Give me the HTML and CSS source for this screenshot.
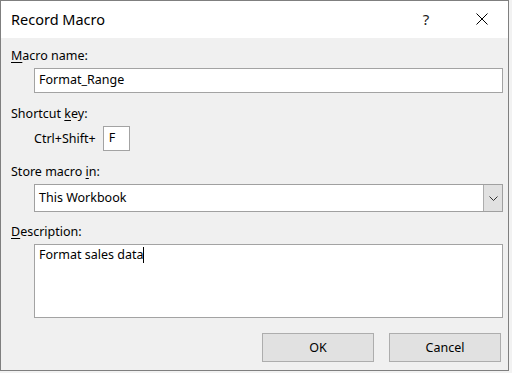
FILE: index.html
```html
<!DOCTYPE html>
<html lang="en">
<head>
<meta charset="utf-8">
<title>Record Macro</title>
<link rel="stylesheet" href="styles.css">
</head>
<body>
<div class="dialog">
  <div class="titlebar">
    <span class="title">Record Macro</span>
    <span class="tbtn help">?</span>
    <span class="tbtn close">
      <svg width="12" height="12" viewBox="0 0 12 12"><path d="M0.5 0.5 L11.5 11.5 M11.5 0.5 L0.5 11.5" stroke="#000" stroke-width="1" fill="none"/></svg>
    </span>
  </div>
  <div class="content">
    <div class="lbl"><u>M</u>acro name:</div>
    <div class="field input">Format_Range</div>

    <div class="lbl gap13">Shortcut <u>k</u>ey:</div>
    <div class="shortcut">
      <span class="ctrl">Ctrl+Shift+</span>
      <div class="keybox">F</div>
    </div>

    <div class="lbl gap13">Store macro <u>i</u>n:</div>
    <div class="field select">
      <span class="sel-text">This Workbook</span>
      <span class="drop">
        <svg width="9" height="5" viewBox="0 0 9 5"><path d="M0.5 0.5 L4.5 4.5 L8.5 0.5" stroke="#333" stroke-width="1" fill="none"/></svg>
      </span>
    </div>

    <div class="lbl gap12"><u>D</u>escription:</div>
    <div class="field textarea">Format sales data<span class="caret"></span></div>

    <div class="buttons">
      <div class="btn">OK</div>
      <div class="btn">Cancel</div>
    </div>
  </div>
</div>
</body>
</html>
```

FILE: styles.css
```css
html {
  background: #f2f2f2;
}
body {
  margin: 0;
  font-family: "Noto Sans", "Open Sans", sans-serif;
  font-size: 12.5px;
  color: #000;
}
.dialog {
  box-sizing: border-box;
  width: 509px;
  height: 371px;
  border: 1px solid #7f7f7f;
  background: #f0f0f0;
  display: flex;
  flex-direction: column;
}
.titlebar {
  box-sizing: border-box;
  height: 37px;
  background: #fff;
  display: flex;
  align-items: flex-start;
  padding: 8px 8px 0 10px;
}
.title {
  flex: 1;
  font-size: 14.5px;
  line-height: 20px;
}
.tbtn {
  width: 36px;
  display: flex;
  justify-content: center;
}
.help {
  font-size: 15px;
  line-height: 20px;
  color: #1a1a1a;
  margin-right: 20px;
}
.close {
  padding-top: 4px;
}
.content {
  flex: 1;
  padding: 10px 5px 8px 10px;
  display: flex;
  flex-direction: column;
}
.lbl {
  line-height: 16px;
  height: 16px;
}
.lbl u {
  text-underline-offset: 2px;
}
.gap13 { margin-top: 13px; }
.gap12 { margin-top: 12px; }
.field {
  box-sizing: border-box;
  margin-left: 23px;
  margin-top: 4px;
  background: #fff;
  border: 1px solid #a3a3a3;
  line-height: 16px;
}
.input {
  height: 25px;
  padding: 3px 4px;
}
.shortcut {
  margin: 4px 0 0 23px;
  display: flex;
  align-items: center;
  gap: 7px;
  height: 25px;
  line-height: 16px;
}
.keybox {
  box-sizing: border-box;
  width: 27px;
  height: 25px;
  border: 1px solid #a3a3a3;
  background: #fff;
  padding: 3px 5px;
}
.select {
  height: 28px;
  display: flex;
  align-items: center;
  border-color: #a0a0a0;
}
.sel-text {
  flex: 1;
  padding-left: 4px;
}
.drop {
  box-sizing: border-box;
  width: 19px;
  align-self: stretch;
  background: #e1e1e1;
  border-left: 1px solid #adadad;
  display: flex;
  align-items: center;
  justify-content: center;
}
.textarea {
  height: 74px;
  padding: 2px 4px;
}
.caret {
  display: inline-block;
  width: 1px;
  height: 16px;
  background: #000;
  vertical-align: top;
}
.buttons {
  margin-top: 15px;
  display: flex;
  justify-content: flex-end;
  gap: 15px;
  padding-right: 2px;
}
.btn {
  box-sizing: border-box;
  width: 112px;
  height: 29px;
  background: #e1e1e1;
  border: 1px solid #adadad;
  display: flex;
  align-items: center;
  justify-content: center;
  line-height: 16px;
}
```
